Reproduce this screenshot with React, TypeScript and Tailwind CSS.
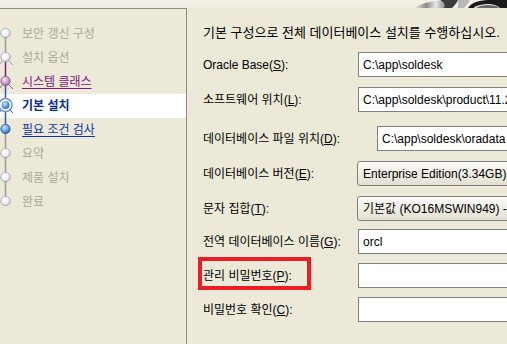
const font = {
  fontFamily: '"Liberation Sans", "Noto Sans CJK KR", sans-serif',
};

type Step = { label: string; kind: "done" | "visited" | "current" | "link" | "todo" };

const steps: Step[] = [
  { label: "보안 갱신 구성", kind: "done" },
  { label: "설치 옵션", kind: "done" },
  { label: "시스템 클래스", kind: "visited" },
  { label: "기본 설치", kind: "current" },
  { label: "필요 조건 검사", kind: "link" },
  { label: "요약", kind: "todo" },
  { label: "제품 설치", kind: "todo" },
  { label: "완료", kind: "todo" },
];

function stepText(kind: Step["kind"]) {
  if (kind === "visited") return "text-[#7a1a7a] underline underline-offset-2";
  if (kind === "current") return "font-bold text-[#0a2a8a]";
  if (kind === "link") return "text-[#0b34a8] underline underline-offset-2";
  return "text-[#aca899]";
}

function Rail() {
  const ys = steps.map((_, i) => 24 + i * 24);
  const fillFor = (k: Step["kind"]) =>
    k === "visited" ? "url(#gp)" : k === "current" || k === "link" ? "url(#gb)" : "url(#gg)";
  const strokeFor = (k: Step["kind"]) =>
    k === "visited" ? "#8a5a8a" : k === "current" || k === "link" ? "#2f5fb0" : "#9aa0ab";
  return (
    <svg className="absolute left-0 top-0" width="24" height="220" viewBox="0 0 24 220">
      <defs>
        <radialGradient id="gg" cx="0.4" cy="0.35" r="0.7">
          <stop offset="0" stopColor="#ffffff" />
          <stop offset="0.6" stopColor="#eef0f5" />
          <stop offset="1" stopColor="#b9bfcc" />
        </radialGradient>
        <radialGradient id="gp" cx="0.4" cy="0.35" r="0.7">
          <stop offset="0" stopColor="#f6e8f6" />
          <stop offset="0.6" stopColor="#c59ac5" />
          <stop offset="1" stopColor="#8a5a8a" />
        </radialGradient>
        <radialGradient id="gb" cx="0.4" cy="0.35" r="0.7">
          <stop offset="0" stopColor="#d8e8ff" />
          <stop offset="0.6" stopColor="#5b95e0" />
          <stop offset="1" stopColor="#2a5ab0" />
        </radialGradient>
      </defs>
      <line x1="5.5" y1={ys[0]} x2="5.5" y2={ys[1]} stroke="#9a9a9a" strokeWidth="1.5" />
      <line x1="5.5" y1={ys[1]} x2="5.5" y2={ys[2]} stroke="#7a1a7a" strokeWidth="1.5" />
      <line x1="5.5" y1={ys[2]} x2="5.5" y2={ys[4]} stroke="#2f5fb0" strokeWidth="1.5" />
      <line x1="5.5" y1={ys[4]} x2="5.5" y2={ys[7]} stroke="#9a9a9a" strokeWidth="1.5" />
      {/* little legs under the passed steps */}
      {[1, 2, 3].map((i) => (
        <g key={i} stroke={i === 2 ? "#8a5a8a" : i === 3 ? "#2f5fb0" : "#9a9a9a"} strokeWidth="1">
          <line x1="8" y1={ys[i] + 3} x2="13" y2={ys[i] + 8} />
          <line x1="3" y1={ys[i] + 3} x2="-1" y2={ys[i] + 8} />
        </g>
      ))}
      {steps.map((s, i) =>
        s.kind === "current" ? (
          <g key={i}>
            <circle cx="5.5" cy={ys[i]} r="6.5" fill="#ffffff" stroke="#6f95d0" strokeWidth="1.5" />
            <circle cx="5.5" cy={ys[i]} r="4" fill="url(#gb)" />
          </g>
        ) : (
          <circle key={i} cx="5.5" cy={ys[i]} r="4.7" fill={fillFor(s.kind)} stroke={strokeFor(s.kind)} strokeWidth="0.8" />
        )
      )}
    </svg>
  );
}

function Label({ text, mn, w }: { text: string; mn: string; w: string }) {
  return (
    <div className={`${w} shrink-0 whitespace-nowrap text-[12px] text-black`}>
      {text}(<span className="underline">{mn}</span>):
    </div>
  );
}

function Field({ value }: { value?: string }) {
  return (
    <div className="flex h-[25px] w-[200px] shrink-0 items-center border border-[#7f7f7f] bg-white px-[4px] text-[12px] whitespace-nowrap text-black">
      {value}
    </div>
  );
}

function Combo({ value }: { value: string }) {
  return (
    <div className="flex h-[25px] w-[200px] shrink-0 items-center rounded-[3px] border border-[#7f7f7f] bg-gradient-to-b from-[#fbfaf6] to-[#e3e0d2] px-[5px] text-[12px] whitespace-nowrap text-black">
      {value}
    </div>
  );
}

export default function App() {
  return (
    <div className="flex h-[344px] w-[507px] flex-col overflow-hidden bg-[#ece9d8]" style={font}>
      <div className="flex h-[8px] shrink-0 bg-gradient-to-b from-[#f4f2ea] to-[#eeebdf]">
        <div className="flex-1" />
        <svg width="107" height="8" viewBox="0 0 107 8">
          <defs>
            <linearGradient id="sw" x1="0" x2="1" y1="0" y2="0">
              <stop offset="0" stopColor="#efece2" />
              <stop offset="0.35" stopColor="#8a8a8a" />
              <stop offset="0.6" stopColor="#e8e8e8" />
              <stop offset="1" stopColor="#5a5a5a" />
            </linearGradient>
          </defs>
          <path d="M14 8 C24 2 36 0 50 0 L50 8 Z" fill="url(#sw)" />
          <path d="M40 0 L58 0 C56 4 54 6 52 8 L44 8 C46 5 44 2 40 0Z" fill="#3c3c3c" />
          <path d="M58 0 L70 0 C68 3 66 6 64 8 L58 8 Z" fill="#b8b8b8" />
          <path d="M68 8 C72 2 80 0 90 0 L107 0 L107 8 L100 8 C96 4 88 3 80 5 C76 6 74 7 74 8 Z" fill="#1a1a1a" />
          <path d="M76 8 C80 5 88 4 96 6 C98 7 99 8 99 8 Z" fill="#6a6a6a" />
        </svg>
      </div>
      <div className="flex flex-1">
        <aside className="relative w-[187px] shrink-0 border-t border-r border-[#8c8c8c] pt-[13px]">
          <Rail />
          {steps.map((s) => (
            <div
              key={s.label}
              className={`flex h-[24px] items-center pl-[22px] text-[12px] whitespace-nowrap ${
                s.kind === "current" ? "bg-white" : ""
              }`}
            >
              <span className={stepText(s.kind)}>{s.label}</span>
            </div>
          ))}
        </aside>
        <main className="flex min-w-0 flex-1 flex-col overflow-hidden pt-[17px] pl-[16px]">
          <p className="h-[16px] text-[13px] leading-[16px] whitespace-nowrap text-black">
            기본 구성으로 전체 데이터베이스 설치를 수행하십시오.
          </p>
          <div className="mt-[11px] flex items-center">
            <Label text="Oracle Base" mn="S" w="w-[155px]" />
            <Field value="C:\app\soldesk" />
          </div>
          <div className="mt-[10px] flex items-center">
            <Label text="소프트웨어 위치" mn="L" w="w-[155px]" />
            <Field value="C:\app\soldesk\product\11.2.0\dbhome_1" />
          </div>
          <div className="mt-[14px] flex items-center">
            <Label text="데이터베이스 파일 위치" mn="D" w="w-[174px]" />
            <Field value="C:\app\soldesk\oradata" />
          </div>
          <div className="mt-[10px] flex items-center">
            <Label text="데이터베이스 버전" mn="E" w="w-[154px]" />
            <Combo value="Enterprise Edition(3.34GB)" />
          </div>
          <div className="mt-[10px] flex items-center">
            <Label text="문자 집합" mn="T" w="w-[154px]" />
            <Combo value="기본값 (KO16MSWIN949) - 한국어" />
          </div>
          <div className="mt-[8px] flex items-center">
            <Label text="전역 데이터베이스 이름" mn="G" w="w-[155px]" />
            <Field value="orcl" />
          </div>
          <div className="relative mt-[9px] flex items-center">
            <div className="absolute top-[-6px] left-[-5px] h-[33px] w-[113px] border-[4px] border-[#ec1c24]" />
            <Label text="관리 비밀번호" mn="P" w="w-[155px]" />
            <Field />
          </div>
          <div className="mt-[9px] flex items-center">
            <Label text="비밀번호 확인" mn="C" w="w-[155px]" />
            <Field />
          </div>
        </main>
      </div>
    </div>
  );
}
